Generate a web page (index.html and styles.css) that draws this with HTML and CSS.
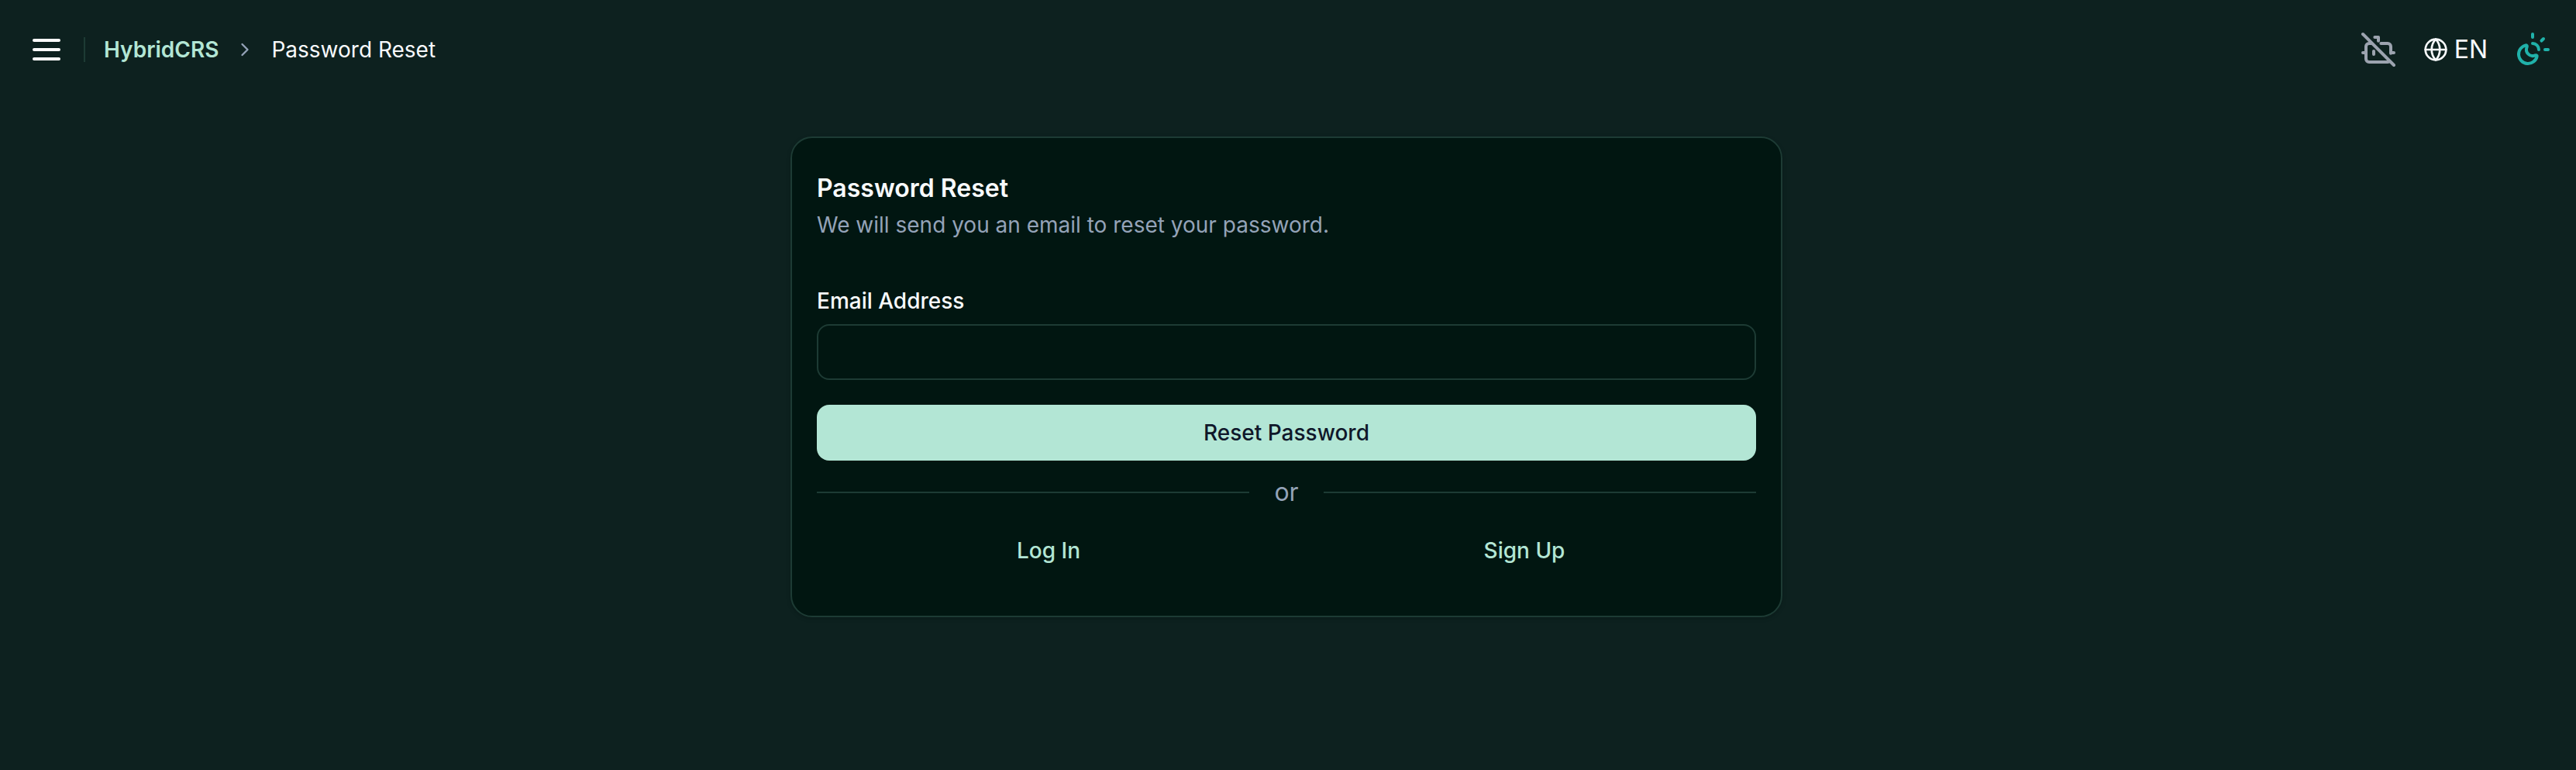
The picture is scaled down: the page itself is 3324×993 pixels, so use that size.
FILE: index.html
```html
<!DOCTYPE html>
<html lang="en">
<head>
<meta charset="utf-8">
<title>Password Reset</title>
<link rel="stylesheet" href="styles.css">
</head>
<body>
<header class="topbar">
  <button class="menu-button" aria-label="Menu">
    <svg class="icon-menu" viewBox="0 0 24 24"><path d="M4 6h16M4 12h16M4 18h16"/></svg>
  </button>
  <span class="divider"></span>
  <nav class="breadcrumb">
    <a class="brand">HybridCRS</a>
    <svg class="icon-chevron" viewBox="0 0 24 24"><path d="m9 18 6-6-6-6"/></svg>
    <span class="current">Password Reset</span>
  </nav>
  <div class="tools">
    <svg class="icon-bot" viewBox="0 0 24 24"><path d="M13.67 8H18a2 2 0 0 1 2 2v4.33M2 14h2M20 14h2M22 22 2 2M8 8H6a2 2 0 0 0-2 2v8a2 2 0 0 0 2 2h12a2 2 0 0 0 1.414-.586M9 13v2M9.67 4H12v2.33"/></svg>
    <div class="language">
      <svg class="icon-globe" viewBox="0 0 24 24"><circle cx="12" cy="12" r="10"/><path d="M12 2a14.5 14.5 0 0 0 0 20 14.5 14.5 0 0 0 0-20M2 12h20"/></svg>
      <span>EN</span>
    </div>
    <svg class="icon-theme" viewBox="0 0 24 24"><path d="M12 2v2M14.837 16.385a6 6 0 1 1-7.223-7.222c.624-.147.97.66.715 1.248a4 4 0 0 0 5.26 5.259c.589-.255 1.396.09 1.248.715M16 12a4 4 0 0 0-4-4M19 5l-1.256 1.256M20 12h2"/></svg>
  </div>
</header>
<main class="page">
  <section class="card">
    <h1 class="title">Password Reset</h1>
    <p class="description">We will send you an email to reset your password.</p>
    <form class="form">
      <label class="label" for="email">Email Address</label>
      <input class="input" id="email" type="email">
      <button class="submit" type="button">Reset Password</button>
    </form>
    <div class="or"><span>or</span></div>
    <div class="links"><a class="link">Log In</a><a class="link">Sign Up</a></div>
  </section>
</main>
</body>
</html>
```
FILE: styles.css
```css
* { box-sizing: border-box; margin: 0; }
body {
  min-height: 100vh;
  background: #0d211f;
  color: #f8fafc;
  font: 28px/40px Inter, sans-serif;
}
svg { fill: none; stroke: currentColor; stroke-width: 2; stroke-linecap: round; stroke-linejoin: round; flex: none; }
.topbar { display: flex; align-items: center; height: 128px; padding: 0 32px 0 36px; }
.menu-button { display: flex; padding: 0; border: 0; background: none; color: #fff; }
.icon-menu { width: 48px; height: 48px; }
.divider { width: 2px; height: 32px; margin: 0 24px; background: #1d3b34; }
.breadcrumb { display: flex; align-items: center; gap: 20px; }
.brand { color: #b3e6d5; font-weight: 600; }
.icon-chevron { width: 28px; height: 28px; color: #94a3b8; }
.tools { display: flex; align-items: center; margin-left: auto; }
.icon-bot { width: 48px; height: 48px; color: #9ca3af; }
.language { display: flex; align-items: center; gap: 8px; margin: 0 34px; font-size: 32px; }
.icon-globe { width: 32px; height: 32px; }
.icon-theme { width: 48px; height: 48px; color: #20b2aa; }
.page { display: flex; justify-content: center; padding: 48px 4px 0 0; }
.card {
  width: 1280px;
  height: 620px;
  padding: 49px 32px 47px;
  border: 2px solid #1d3b34;
  border-radius: 28px;
  background: #011611;
  box-shadow: 0 2px 6px rgb(0 0 0 / 10%), 0 2px 4px -2px rgb(0 0 0 / 10%);
}
.title { font-size: 32px; line-height: 32px; font-weight: 600; }
.description { margin-top: 11px; color: #94a3b8; }
.form { display: flex; flex-direction: column; margin-top: 64px; }
.label { font-weight: 500; line-height: 28px; }
.input { height: 72px; margin-top: 16px; border: 2px solid #1d3b34; border-radius: 16px; background: transparent; color: inherit; font: inherit; padding: 0 24px; }
.submit { height: 72px; margin-top: 32px; border: 0; border-radius: 16px; background: #b3e6d5; color: #0f172a; font: inherit; font-weight: 500; }
.or { display: flex; align-items: center; gap: 32px; margin-top: 17px; color: #94a3b8; font-size: 32px; line-height: 48px; }
.or::before, .or::after { content: ""; flex: 1; height: 2px; background: #1d3b34; }
.links { display: grid; grid-template-columns: 1fr 1fr; gap: 16px; margin-top: 15px; }
.link { display: flex; align-items: center; justify-content: center; height: 72px; color: #b3e6d5; font-weight: 500; }
```
